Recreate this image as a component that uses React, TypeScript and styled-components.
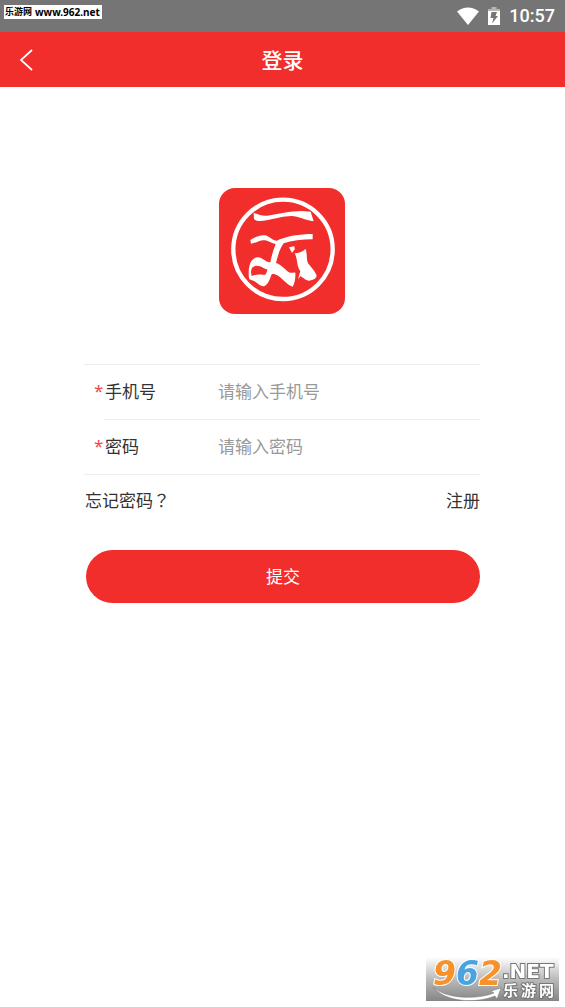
import React from "react";
import styled, { createGlobalStyle } from "styled-components";

const GlobalStyle = createGlobalStyle`
  *, *::before, *::after { box-sizing: border-box; }
  body {
    margin: 0;
    background: #fff;
    color: #333;
    font-family: "Noto Sans", "Noto Sans CJK SC", sans-serif;
  }
`;

const red = "#f22e2c";

const Screen = styled.div`
  min-height: 100vh;
  position: relative;
`;

const StatusBar = styled.div`
  height: 32px;
  padding: 0 10px 0 4px;
  background: #757575;
  display: flex;
  align-items: center;
  justify-content: space-between;
`;

const SiteTag = styled.span`
  height: 14px;
  margin-bottom: 8px;
  padding: 0 2px 0 1px;
  background: #fff;
  color: #000;
  display: flex;
  align-items: center;
  gap: 3px;
  font: bold 9px/14px "Noto Sans CJK SC", sans-serif;
`;

const SiteUrl = styled.span`
  font: bold 10px/14px "Noto Sans", sans-serif;
`;

const StatusIcons = styled.div`
  display: flex;
  align-items: center;
  gap: 9px;
`;

const Clock = styled.span`
  color: #fff;
  font: 500 18px/32px Roboto, sans-serif;
`;

const NavBar = styled.header`
  height: 55px;
  padding: 0 12px;
  background: ${red};
  color: #fff;
  display: grid;
  grid-template-columns: 32px 1fr 32px;
  align-items: center;
`;

const BackButton = styled.button`
  height: 40px;
  padding: 0 0 0 7px;
  border: 0;
  background: none;
  display: flex;
  align-items: center;
`;

const Title = styled.h1`
  margin: 0;
  padding-bottom: 2px;
  text-align: center;
  font: 500 21px/30px "Noto Sans CJK SC", sans-serif;
`;

const Main = styled.main`
  padding: 101px 85px 40px 84px;
  display: flex;
  flex-direction: column;
  align-items: center;
`;

const LoginForm = styled.form`
  width: 100%;
  margin-top: 50px;
`;

const Fields = styled.div`
  border-top: 1px solid #eee;
  border-bottom: 1px solid #eee;
`;

const Field = styled.div`
  height: 54px;
  padding: 0 0 2px 10px;
  display: flex;
  align-items: center;
  position: relative;

  & + & {
    height: 55px;
  }
  & + &::before {
    content: "";
    position: absolute;
    top: 0;
    left: 20px;
    right: 0;
    border-top: 1px solid #eee;
  }
`;

const Label = styled.label`
  width: 124px;
  flex: none;
  display: flex;
  font: 400 17px/26px "Noto Sans CJK SC", sans-serif;
`;

const Required = styled.span`
  width: 11px;
  color: #f04848;
  font-family: "Noto Sans", sans-serif;
`;

const TextInput = styled.input`
  flex: 1;
  min-width: 0;
  height: 26px;
  padding: 0;
  border: 0;
  outline: 0;
  background: none;
  color: #333;
  font: 400 17px/26px "Noto Sans CJK SC", sans-serif;

  &::placeholder {
    color: #999;
    opacity: 1;
  }
`;

const Links = styled.div`
  padding: 12px 0 0 1px;
  display: flex;
  justify-content: space-between;
`;

const TextLink = styled.a`
  color: #333;
  text-decoration: none;
  font: 400 17px/26px "Noto Sans CJK SC", sans-serif;
`;

const QuestionMark = styled.span`
  font-family: "Noto Sans CJK TC", sans-serif;
`;

const SubmitButton = styled.button`
  display: block;
  width: calc(100% - 2px);
  height: 53px;
  margin: 37px 0 0 2px;
  padding: 0 0 2px;
  border: 0;
  border-radius: 27px;
  background: ${red};
  color: #fff;
  font: 400 17px/26px "Noto Sans CJK SC", sans-serif;
`;

const Watermark = styled.div`
  position: fixed;
  right: 6px;
  bottom: 6px;
  width: 133px;
  height: 44px;
`;

function WifiIcon() {
  return (
    <svg width="22" height="18" viewBox="0 0 22 18" aria-hidden="true">
      <path d="M0 4.5Q11-3.5 22 4.5L11 18Z" fill="#fff" />
    </svg>
  );
}

function BatteryIcon() {
  return (
    <svg width="12" height="19" viewBox="0 0 12 19" aria-hidden="true">
      <path d="M3.500 0h5v2H12v3H0V2h3.500Z" fill="#b5b5b5" />
      <path d="M0 4h12v14H0Z" fill="#fff" />
      <path d="M3.500 5H9L7.500 9H10L4 16.500L5.500 11H2.500Z" fill="#757575" />
    </svg>
  );
}

function BackIcon() {
  return (
    <svg width="14" height="22" viewBox="0 0 14 22" aria-hidden="true">
      <path d="M13 1L2 11L13 21" fill="none" stroke="#fff" strokeWidth="1.700" />
    </svg>
  );
}

function Logo() {
  return (
    <svg width="126" height="126" viewBox="-63 -36 378 378" role="img" aria-label="云">
      <rect x="-63" y="-36" width="378" height="378" rx="48" fill={red} />
      <circle cx="129" cy="148" r="149" fill="none" stroke="#fff" strokeWidth="13" />
      <g fill="#fff">
        <path d="M41 39C58 44 68 49 82 47C115 42 150 33 185 33L212 35L221 64C195 60 175 49 155 48C130 48 100 57 80 61C60 65 45 63 42 56Z" />
        <path d="M31 120C50 108 65 104 80 107C92 112 98 121 110 122C140 108 180 102 218 102V118C185 118 155 122 131 130C120 145 114 165 108 189C125 193 140 215 150 218C156 219 160 216 166 218C167 235 164 250 158 260C140 255 125 232 110 225C104 222 100 221 95 223C90 235 86 252 74 258C62 262 50 246 42 243L28 238C24 222 26 200 32 187C40 172 52 169 62 173C72 178 78 186 91 187C95 165 102 145 107 132C95 131 85 122 76 121C60 118 52 128 33 131Z" />
        <path d="M147 142L163 139L164 148L156 159Z" />
        <path d="M164 160C175 160 187 155 197 147C202 163 199 178 204 190C212 200 222 210 229 224C232 234 222 240 208 242C195 241 190 233 182 228L174 238L181 214C169 198 174 178 164 160Z" />
      </g>
      <path d="M35 228C30 208 36 199 48 197C62 196 74 207 82 208C81 216 79 223 73 225C60 223 48 223 35 228Z" fill={red} />
    </svg>
  );
}

function WatermarkArt() {
  return (
    <svg width="133" height="44" viewBox="0 0 133 44" overflow="visible" role="img" aria-label="962.NET 乐游网">
      <defs>
        <linearGradient id="plate" x1="0" y1="0" x2="0" y2="1">
          <stop offset="0" stopColor="#fff" />
          <stop offset="0.5" stopColor="#bbb" />
          <stop offset="1" stopColor="#858585" />
        </linearGradient>
      </defs>
      <rect width="133" height="44" fill="url(#plate)" />
      <path d="M7 30C20 42 50 43 68 36L65 34L75 31L71 42L69 39C49 47 19 45 7 30Z" fill="#fff" stroke="#777" strokeWidth="0.500" />
      <g fontFamily="DejaVu Sans" fontWeight="bold" fontStyle="italic" fontSize="33" stroke="#fff" strokeWidth="2" paintOrder="stroke">
        <text x="7" y="28" fill="#f7922b">9</text>
        <text x="30" y="28" fill="#4aa3df">6</text>
        <text x="53" y="28" fill="#f7922b">2</text>
      </g>
      <g fill="#fff" stroke="#777" strokeWidth="2" paintOrder="stroke" fontWeight="bold">
        <text x="76" y="21" fontFamily="DejaVu Sans" fontSize="20">.NET</text>
        <g fontFamily="Noto Sans CJK SC" fontSize="15">
          <text x="77" y="39">乐</text>
          <text x="95" y="39">游</text>
          <text x="113" y="39">网</text>
        </g>
      </g>
    </svg>
  );
}

export default function App() {
  return (
    <Screen>
      <GlobalStyle />
      <StatusBar>
        <SiteTag>
          乐游网 <SiteUrl>www.962.net</SiteUrl>
        </SiteTag>
        <StatusIcons>
          <WifiIcon />
          <BatteryIcon />
          <Clock>10:57</Clock>
        </StatusIcons>
      </StatusBar>
      <NavBar>
        <BackButton type="button" aria-label="返回">
          <BackIcon />
        </BackButton>
        <Title>登录</Title>
      </NavBar>
      <Main>
        <Logo />
        <LoginForm onSubmit={(e) => e.preventDefault()}>
          <Fields>
            <Field>
              <Label htmlFor="phone">
                <Required>*</Required>手机号
              </Label>
              <TextInput id="phone" type="tel" placeholder="请输入手机号" />
            </Field>
            <Field>
              <Label htmlFor="password">
                <Required>*</Required>密码
              </Label>
              <TextInput id="password" type="password" placeholder="请输入密码" />
            </Field>
          </Fields>
          <Links>
            <TextLink href="#forgot">
              忘记密码<QuestionMark lang="zh-TW">？</QuestionMark>
            </TextLink>
            <TextLink href="#register">注册</TextLink>
          </Links>
          <SubmitButton type="submit">提交</SubmitButton>
        </LoginForm>
      </Main>
      <Watermark>
        <WatermarkArt />
      </Watermark>
    </Screen>
  );
}
